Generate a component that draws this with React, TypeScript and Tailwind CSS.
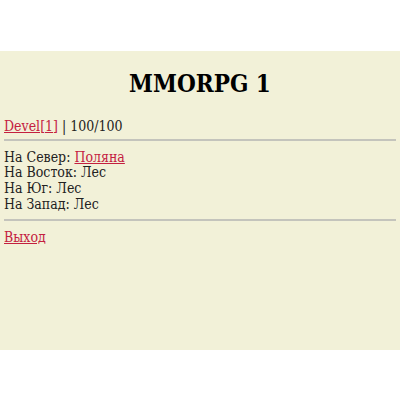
import React from "react";

export default function App() {
  const link = "text-[#c4203f] underline";
  return (
    <div className="w-[400px] h-[400px] bg-white pt-[51px]" style={{ fontFamily: '"DejaVu Serif Condensed", "DejaVu Serif", serif' }}>
      <div className="h-[299px] bg-[#f2f1d8] px-[4px] text-[#222] text-[14px] leading-[15.7px] overflow-hidden">
        <h1 className="pt-[18px] text-center text-[24px] leading-[30px] font-bold text-black">MMORPG 1</h1>
        <div className="mt-[20px]">
          <a className={link}>Devel[1]</a> | 100/100
        </div>
        <hr className="mt-[4px] border-t-2 border-[#c4c4bc]" />
        <div className="mt-[9px]">
          <div>На Север: <a className={link}>Поляна</a></div>
          <div>На Восток: Лес</div>
          <div>На Юг: Лес</div>
          <div>На Запад: Лес</div>
        </div>
        <hr className="mt-[6px] border-t-2 border-[#c4c4bc]" />
        <div className="mt-[9px]">
          <a className={link}>Выход</a>
        </div>
      </div>
    </div>
  );
}
